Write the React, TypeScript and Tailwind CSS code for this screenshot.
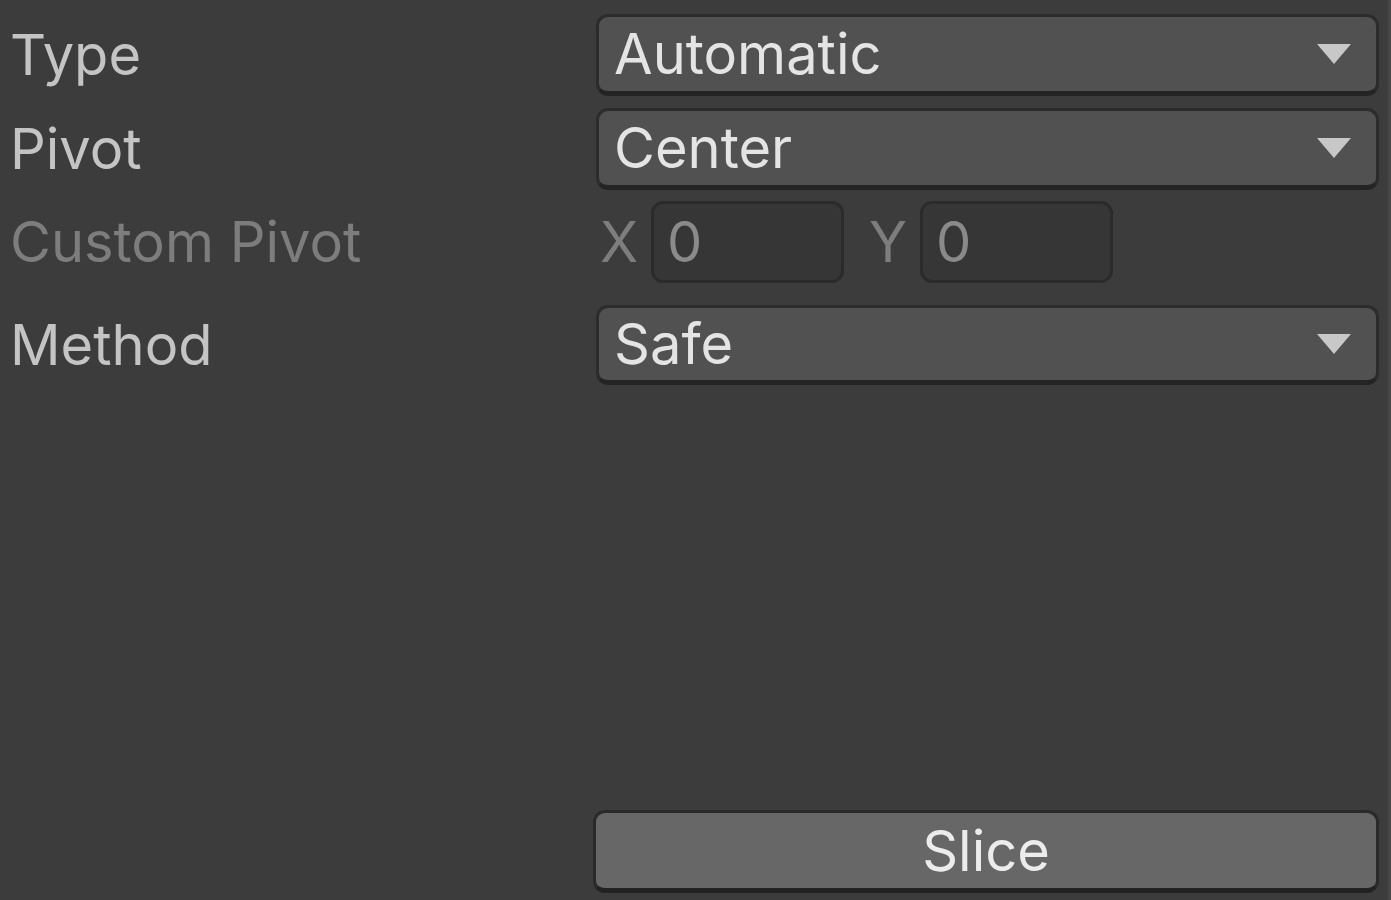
import React from "react";

/* ─── Unity-style sprite slice panel ─── */

const FONT = "font-['Inter','Noto_Sans',sans-serif]";

function Label({ text, disabled }: { text: string; disabled?: boolean }) {
  return (
    <div
      className={`w-[596px] shrink-0 pl-[10px] text-[56px] leading-none ${
        disabled ? "text-[#7d7d7d]" : "text-[#c4c4c4]"
      }`}
    >
      {text}
    </div>
  );
}

function Dropdown({ value, height = "h-[82px]" }: { value: string; height?: string }) {
  return (
    <div
      className={`flex-1 ${height} flex items-center justify-between rounded-[12px] border-[3px] border-b-[5px] border-[#2c2c2c] border-b-[#242424] bg-[#515151] pl-[15px] pr-[25px]`}
    >
      <span className="text-[56px] leading-none text-[#e4e4e4]">{value}</span>
      <svg width="34" height="20" viewBox="0 0 34 20">
        <path d="M0 0 H34 L17 20 Z" fill="#c8c8c8" />
      </svg>
    </div>
  );
}

function NumberField({ axis, value }: { axis: string; value: string }) {
  return (
    <div className="flex items-center">
      <span className="w-[55px] pl-[4px] text-[56px] leading-none text-[#7d7d7d]">{axis}</span>
      <div className="flex h-[82px] w-[193px] items-center rounded-[12px] border-[3px] border-[#2b2b2b] bg-[#363636] pl-[13px]">
        <span className="text-[56px] leading-none text-[#8a8a8a]">{value}</span>
      </div>
    </div>
  );
}

export default function App() {
  return (
    <div className={`flex h-[900px] w-[1391px] overflow-hidden bg-[#3c3c3c] ${FONT}`}>
      <div className="flex flex-1 flex-col pt-[14px] pr-[9px]">
        <div className="flex items-center">
          <Label text="Type" />
          <Dropdown value="Automatic" />
        </div>
        <div className="mt-[12px] flex items-center">
          <Label text="Pivot" />
          <Dropdown value="Center" />
        </div>
        <div className="mt-[11px] flex items-center">
          <Label text="Custom Pivot" disabled />
          <div className="flex gap-[21px]">
            <NumberField axis="X" value="0" />
            <NumberField axis="Y" value="0" />
          </div>
        </div>
        <div className="mt-[22px] flex items-center">
          <Label text="Method" />
          <Dropdown value="Safe" height="h-[80px]" />
        </div>

        <div className="mt-auto mb-[7px] flex">
          <div className="w-[593px] shrink-0" />
          <button
            type="button"
            className="flex h-[83px] flex-1 items-center justify-center rounded-[12px] border-[3px] border-b-[5px] border-[#2a2a2a] border-b-[#222222] bg-[#676767] text-[56px] leading-none text-[#ececec]"
          >
            Slice
          </button>
        </div>
      </div>
      <div className="w-[3px] bg-[#474747]" />
    </div>
  );
}
